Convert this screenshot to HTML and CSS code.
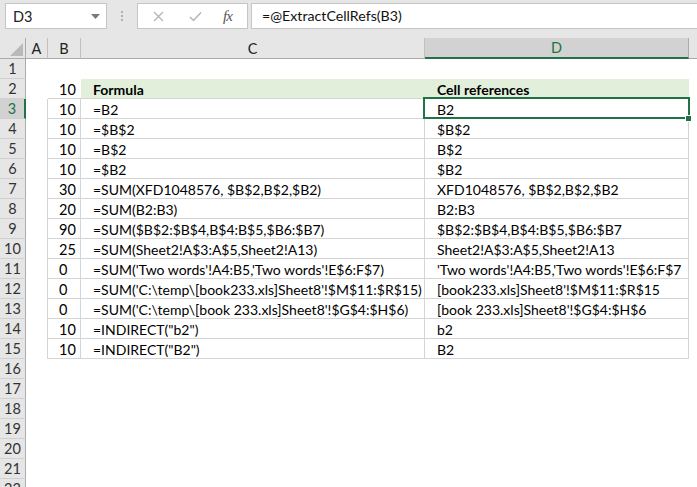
FILE: index.html
```html
<!DOCTYPE html>
<html>
<head>
<meta charset="utf-8">
<link rel="stylesheet" href="styles.css">
</head>
<body>
<div class="toolbar">
  <div class="namebox">
    <span class="name">D3</span>
    <svg class="dd" width="9" height="5" viewBox="0 0 9 5"><path d="M0 0H9L4.5 5Z" fill="#7a7a7a"/></svg>
  </div>
  <div class="grip"><i></i><i></i><i></i></div>
  <div class="fxbox">
    <svg class="ico" width="11" height="11" viewBox="0 0 11 11"><path d="M1 1L10 10M10 1L1 10" stroke="#b4b4b4" stroke-width="1.3" fill="none"/></svg>
    <svg class="ico" width="13" height="11" viewBox="0 0 13 11"><path d="M1 6L4.5 9.5L12 1.5" stroke="#b4b4b4" stroke-width="1.5" fill="none"/></svg>
    <span class="fx">fx</span>
  </div>
  <div class="formula">=@ExtractCellRefs(B3)</div>
</div>
<div class="sheet">
  <div class="row hdr">
    <div class="rh corner"><span class="tri"></span></div>
    <div class="ch a">A</div>
    <div class="ch b">B</div>
    <div class="ch c">C</div>
    <div class="ch d act">D</div>
    <div class="ch e"></div>
  </div>
  <div class="row"><div class="rh">1</div><div class="cell a"></div><div class="cell b"></div><div class="cell c"></div><div class="cell d"></div><div class="cell e"></div></div>
  <div class="row top"><div class="rh">2</div><div class="cell a"></div><div class="cell b">10</div><div class="cell c green bold">Formula</div><div class="cell d green bold">Cell references</div><div class="cell e"></div></div>
  <div class="row data"><div class="rh act">3</div><div class="cell a"></div><div class="cell b">10</div><div class="cell c">=B2</div><div class="cell d selcell">B2<span class="sel"></span><span class="handle"></span></div><div class="cell e"></div></div>
  <div class="row data"><div class="rh">4</div><div class="cell a"></div><div class="cell b">10</div><div class="cell c">=$B$2</div><div class="cell d">$B$2</div><div class="cell e"></div></div>
  <div class="row data"><div class="rh">5</div><div class="cell a"></div><div class="cell b">10</div><div class="cell c">=B$2</div><div class="cell d">B$2</div><div class="cell e"></div></div>
  <div class="row data"><div class="rh">6</div><div class="cell a"></div><div class="cell b">10</div><div class="cell c">=$B2</div><div class="cell d">$B2</div><div class="cell e"></div></div>
  <div class="row data"><div class="rh">7</div><div class="cell a"></div><div class="cell b">30</div><div class="cell c">=SUM(XFD1048576, $B$2,B$2,$B2)</div><div class="cell d">XFD1048576, $B$2,B$2,$B2</div><div class="cell e"></div></div>
  <div class="row data"><div class="rh">8</div><div class="cell a"></div><div class="cell b">20</div><div class="cell c">=SUM(B2:B3)</div><div class="cell d">B2:B3</div><div class="cell e"></div></div>
  <div class="row data"><div class="rh">9</div><div class="cell a"></div><div class="cell b">90</div><div class="cell c">=SUM($B$2:$B$4,B$4:B$5,$B6:$B7)</div><div class="cell d">$B$2:$B$4,B$4:B$5,$B6:$B7</div><div class="cell e"></div></div>
  <div class="row data"><div class="rh">10</div><div class="cell a"></div><div class="cell b">25</div><div class="cell c">=SUM(Sheet2!A$3:A$5,Sheet2!A13)</div><div class="cell d">Sheet2!A$3:A$5,Sheet2!A13</div><div class="cell e"></div></div>
  <div class="row data"><div class="rh">11</div><div class="cell a"></div><div class="cell b">0</div><div class="cell c">=SUM('Two words'!A4:B5,'Two words'!E$6:F$7)</div><div class="cell d">'Two words'!A4:B5,'Two words'!E$6:F$7</div><div class="cell e"></div></div>
  <div class="row data"><div class="rh">12</div><div class="cell a"></div><div class="cell b">0</div><div class="cell c">=SUM('C:\temp\[book233.xls]Sheet8'!$M$11:$R$15)</div><div class="cell d">[book233.xls]Sheet8'!$M$11:$R$15</div><div class="cell e"></div></div>
  <div class="row data"><div class="rh">13</div><div class="cell a"></div><div class="cell b">0</div><div class="cell c">=SUM('C:\temp\[book 233.xls]Sheet8'!$G$4:$H$6)</div><div class="cell d">[book 233.xls]Sheet8'!$G$4:$H$6</div><div class="cell e"></div></div>
  <div class="row data"><div class="rh">14</div><div class="cell a"></div><div class="cell b">10</div><div class="cell c">=INDIRECT("b2")</div><div class="cell d">b2</div><div class="cell e"></div></div>
  <div class="row data"><div class="rh">15</div><div class="cell a"></div><div class="cell b">10</div><div class="cell c">=INDIRECT("B2")</div><div class="cell d">B2</div><div class="cell e"></div></div>
  <div class="row"><div class="rh">16</div></div>
  <div class="row"><div class="rh">17</div></div>
  <div class="row"><div class="rh">18</div></div>
  <div class="row"><div class="rh">19</div></div>
  <div class="row"><div class="rh">20</div></div>
  <div class="row"><div class="rh">21</div></div>
  <div class="row"><div class="rh">22</div></div>
</div>
</body>
</html>
```
FILE: styles.css
```css
html, body {
  margin: 0;
  padding: 0;
  background: #ffffff;
  overflow: hidden;
}
body {
  width: 697px;
  height: 487px;
  font-family: Lato, "Liberation Sans", sans-serif;
  font-size: 14px;
  color: #000;
}
.toolbar {
  height: 38px;
  background: #e6e6e6;
  display: flex;
  align-items: flex-start;
  padding-top: 3px;
  box-sizing: border-box;
}
.namebox {
  margin-left: 5px;
  width: 102px;
  height: 26px;
  box-sizing: border-box;
  background: #fff;
  border: 1px solid #c6c6c6;
  display: flex;
  align-items: center;
  justify-content: space-between;
  padding: 0 6px 0 7px;
}
.name { font-size: 14.5px; color: #222; }
.grip {
  width: 3px;
  margin-left: 14px;
  margin-right: 13px;
  height: 26px;
  display: flex;
  flex-direction: column;
  justify-content: center;
  gap: 2px;
}
.grip i {
  display: block;
  width: 2px;
  height: 2px;
  background: #b0b0b0;
}
.fxbox {
  width: 111px;
  height: 26px;
  box-sizing: border-box;
  background: #fff;
  border: 1px solid #c6c6c6;
  display: flex;
  align-items: center;
  padding-left: 15px;
}
.fxbox .ico:first-child { margin-right: 25px; }
.fxbox .ico:nth-child(2) { margin-right: 21px; }
.fx {
  font-family: "Liberation Serif", serif;
  font-style: italic;
  font-size: 15px;
  color: #555;
  letter-spacing: -1px;
}
.formula {
  flex: 1;
  margin-left: 3px;
  margin-right: -3px;
  height: 26px;
  box-sizing: border-box;
  background: #fff;
  border: 1px solid #c6c6c6;
  padding-left: 10px;
  line-height: 24px;
  font-size: 14.2px;
  color: #111;
}
.sheet { display: flex; flex-direction: column; }
.row {
  display: flex;
  height: 20px;
  flex: none;
}
.row.hdr {
  height: 21px;
  background: #e6e6e6;
}
.rh {
  width: 26px;
  flex: none;
  box-sizing: border-box;
  background: #e6e6e6;
  border-right: 1px solid #ababab;
  border-bottom: 1px solid #d0d0d0;
  text-align: center;
  line-height: 20px;
  font-size: 14.5px;
  color: #333;
}
.rh.act {
  background: #d2d2d2;
  color: #217346;
  border-right: 2px solid #217346;
}
.corner {
  position: relative;
  border-bottom: 1px solid #ababab;
}
.tri {
  position: absolute;
  right: 2px;
  bottom: 2px;
  width: 0;
  height: 0;
  border-left: 13px solid transparent;
  border-bottom: 13px solid #b9b9b9;
}
.ch {
  box-sizing: border-box;
  flex: none;
  text-align: center;
  line-height: 21px;
  font-size: 14.5px;
  color: #222;
  border-right: 1px solid #c0c0c0;
  border-bottom: 1px solid #ababab;
}
.ch.act {
  background: #d2d2d2;
  color: #217346;
  border-right: 1px solid #ababab;
  border-bottom: 2px solid #217346;
  line-height: 20px;
}
.ch.e { border-right: none; flex: 1; }
.a { width: 22px; }
.b { width: 33px; }
.c { width: 344px; }
.d { width: 264px; }
.e { width: 8px; }
.cell {
  box-sizing: border-box;
  flex: none;
  white-space: nowrap;
  overflow: visible;
  line-height: 21px;
  padding-left: 12px;
}
.cell.a, .cell.e { padding-left: 0; }
.cell.b { padding-left: 11px; font-size: 14.5px; }
.bold { font-weight: bold; font-size: 14px; }
.green { background: #e2efda; }
.row.top .cell.b,
.row.top .cell.c,
.row.top .cell.d { border-bottom: 1px solid #d4d4d4; }
.row.data .cell.a { border-right: 1px solid #d4d4d4; }
.row.data .cell.b,
.row.data .cell.c,
.row.data .cell.d {
  border-right: 1px solid #d4d4d4;
  border-bottom: 1px solid #d4d4d4;
}
.selcell { position: relative; }
.sel {
  position: absolute;
  left: -2px;
  top: -2px;
  right: -2px;
  bottom: -1px;
  border: 2px solid #217346;
}
.handle {
  position: absolute;
  right: -4px;
  bottom: -4px;
  width: 5px;
  height: 5px;
  background: #217346;
  border: 1px solid #fff;
}
```
